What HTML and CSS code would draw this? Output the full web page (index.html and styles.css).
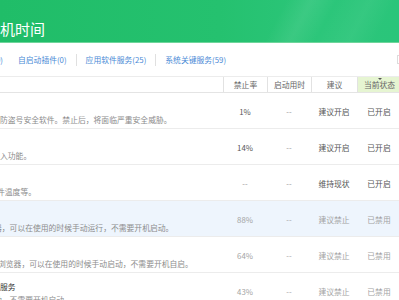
FILE: index.html
```html
<!DOCTYPE html>
<html lang="zh-CN">
<head>
  <meta charset="UTF-8">
  <meta name="viewport" content="width=device-width, initial-scale=1.0">
  <title>开机时间</title>
  <link rel="stylesheet" href="styles.css">
</head>
<body>
  <header class="top">
    <h1>机时间</h1>
  </header>

  <!-- 分类标签 -->
  <nav class="tabs">
    <a class="tab cut">启动项(0)</a>
    <a class="tab">自启动插件(0)</a>
    <i class="sep"></i>
    <a class="tab">应用软件服务(25)</a>
    <i class="sep"></i>
    <a class="tab">系统关键服务(59)</a>
    <span class="search"></span>
  </nav>

  <section class="list">
    <div class="row head">
      <div class="info"></div>
      <div class="cell">禁止率</div>
      <div class="cell">启动用时</div>
      <div class="cell">建议</div>
      <div class="cell sort">当前状态</div>
    </div>

    <div class="row">
      <div class="info">
        <div class="title"></div>
        <div class="desc">防盗号安全软件。禁止后，将面临严重安全威胁。</div>
      </div>
      <div class="cell">1%</div>
      <div class="cell dim">--</div>
      <div class="cell">建议开启</div>
      <div class="cell">已开启</div>
    </div>

    <div class="row">
      <div class="info">
        <div class="title"></div>
        <div class="desc">入功能。</div>
      </div>
      <div class="cell">14%</div>
      <div class="cell dim">--</div>
      <div class="cell">建议开启</div>
      <div class="cell">已开启</div>
    </div>

    <div class="row">
      <div class="info">
        <div class="title"></div>
        <div class="desc shift-3">件温度等。</div>
      </div>
      <div class="cell dim">--</div>
      <div class="cell dim">--</div>
      <div class="cell">维持现状</div>
      <div class="cell">已开启</div>
    </div>

    <div class="row off selected">
      <div class="info">
        <div class="title"></div>
        <div class="desc shift-6">器，可以在使用的时候手动运行，不需要开机启动。</div>
      </div>
      <div class="cell">88%</div>
      <div class="cell">--</div>
      <div class="cell">建议禁止</div>
      <div class="cell">已禁用</div>
    </div>

    <div class="row off">
      <div class="info">
        <div class="title"></div>
        <div class="desc shift-2">浏览器，可以在使用的时候手动启动，不需要开机自启。</div>
      </div>
      <div class="cell">64%</div>
      <div class="cell">--</div>
      <div class="cell">建议禁止</div>
      <div class="cell">已禁用</div>
    </div>

    <div class="row off">
      <div class="info">
        <div class="title">服务</div>
        <div class="desc shift-6">动，不需要开机启动。</div>
      </div>
      <div class="cell">43%</div>
      <div class="cell">--</div>
      <div class="cell">建议禁止</div>
      <div class="cell">已禁用</div>
    </div>
  </section>
</body>
</html>
```

FILE: styles.css
```css
* {
  box-sizing: border-box;
  margin: 0;
  padding: 0;
}

body {
  width: 399px;
  overflow: hidden;
  background-color: #fff;
  color: #555;
  font-family: "Noto Sans CJK SC", "Microsoft YaHei", sans-serif;
  font-size: 7.8px;
}

/* 顶部绿色标题栏 */
.top {
  height: 43px;
  display: flex;
  align-items: flex-end;
  padding-bottom: 4px;
  background:
    linear-gradient(118deg, transparent 68%, rgba(255, 255, 255, 0.08) 74%, transparent 80%, rgba(255, 255, 255, 0.05) 88%, transparent 94%),
    linear-gradient(90deg, #20bd68 0%, #25c16f 55%, #2cc67a 80%, #2ac57a 100%);
  border-bottom: 1px solid #6fd59b;
}

.top h1 {
  font-size: 15px;
  font-weight: normal;
  line-height: 18px;
  color: #fff;
}

/* 分类标签 */
.tabs {
  height: 34px;
  display: flex;
  align-items: center;
  border-bottom: 1px solid #ececec;
}

.tab {
  padding: 0 9px;
  color: #4a8ad6;
  white-space: nowrap;
}

.tab.cut {
  margin-left: -30px;
  padding: 0 6px 0 0;
}

.sep {
  width: 1px;
  height: 12px;
  background-color: #e0e0e0;
}

.search {
  margin-left: auto;
  margin-right: -20px;
  width: 22px;
  height: 9px;
  border: 1px solid #dcdcdc;
  border-right: none;
}

/* 列表 */
.row {
  display: grid;
  grid-template-columns: 223px 44px 44px 46px 44px;
  height: 36px;
  border-bottom: 1px solid #ececec;
}

.row.head {
  height: 16px;
  border-bottom-color: #e4e4e4;
  color: #666;
}

.row.head .cell {
  padding-top: 0;
  border-left: 1px solid #e2e2e2;
}

.row.head .sort {
  position: relative;
  background-color: #e6f5d2;
}

/* 排序小三角 */
.row.head .sort::before {
  content: "";
  position: absolute;
  top: 1px;
  left: 20px;
  border-left: 2px solid transparent;
  border-right: 2px solid transparent;
  border-top: 2px solid #555;
}

.cell {
  display: flex;
  align-items: center;
  justify-content: center;
  padding-top: 2px;
  white-space: nowrap;
}

.cell.dim {
  color: #999;
}

.info {
  padding-top: 7px;
  line-height: 13px;
  white-space: nowrap;
  overflow: hidden;
}

.title {
  height: 13px;
  color: #333;
}

.desc {
  color: #8c8c8c;
}

.shift-2 {
  text-indent: -2px;
}

.shift-3 {
  text-indent: -3px;
}

.shift-6 {
  text-indent: -6px;
}

.row.off .cell {
  color: #a3a3a3;
}

.row.selected {
  background-color: #eef5fd;
}
```
